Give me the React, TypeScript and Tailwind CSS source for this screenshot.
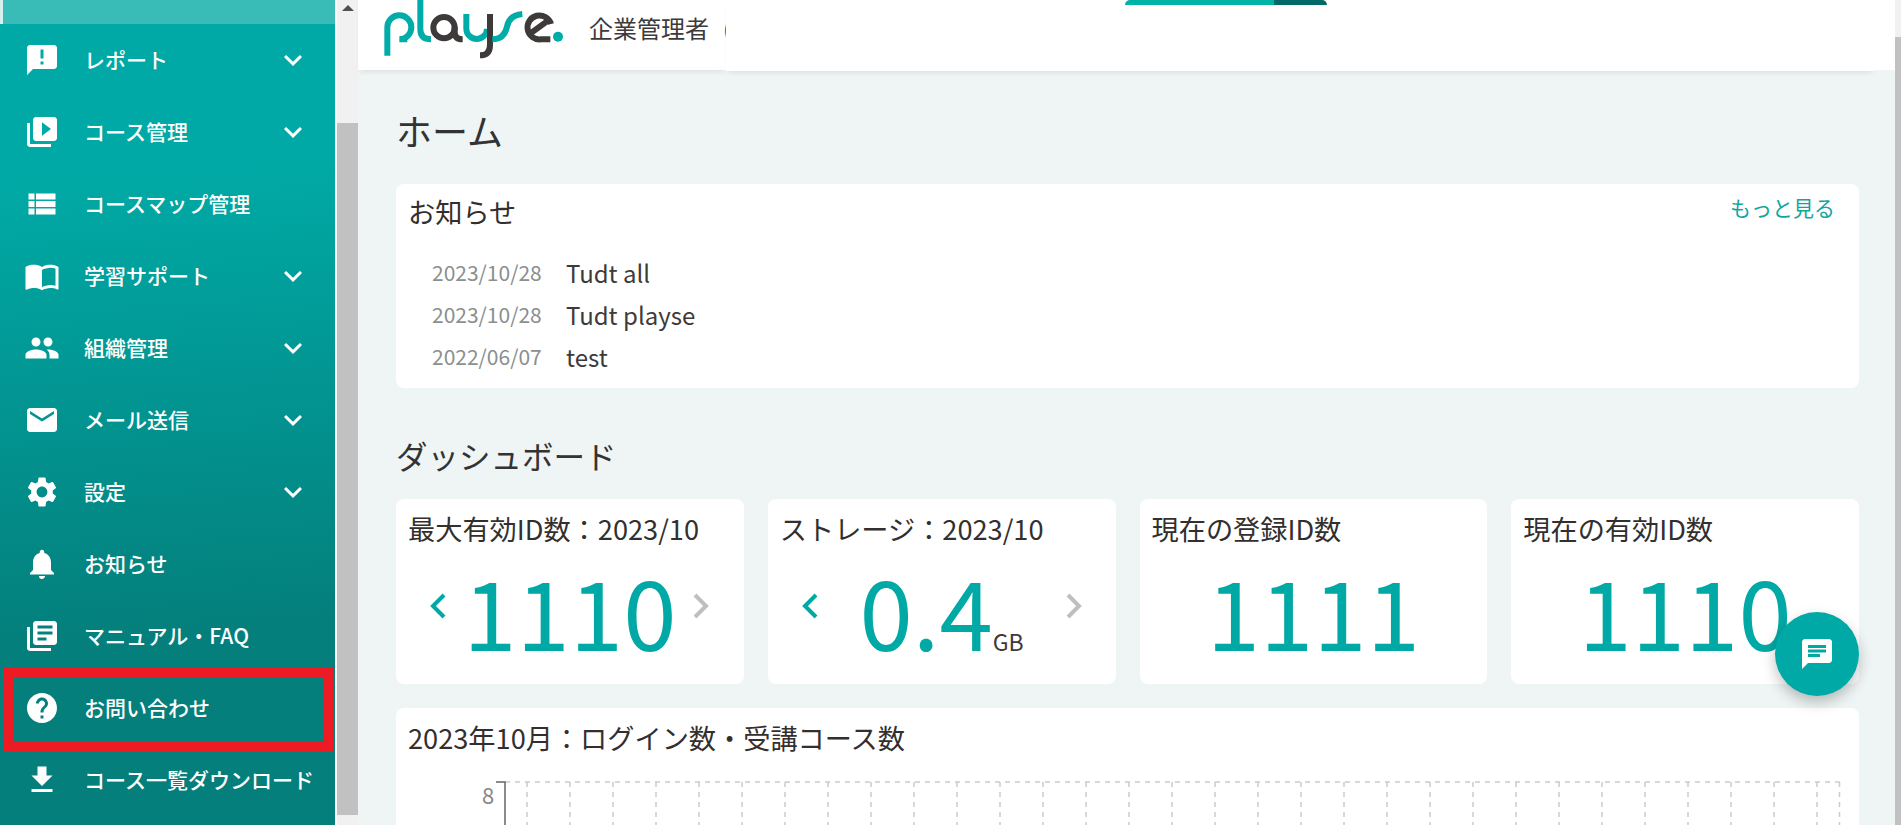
import type { ReactNode } from "react";
import {
  MdAnnouncement,
  MdChat,
  MdEmail,
  MdExpandMore,
  MdGetApp,
  MdHelp,
  MdImportContacts,
  MdLibraryBooks,
  MdNotifications,
  MdPeople,
  MdSettings,
  MdVideoLibrary,
  MdViewList,
} from "react-icons/md";

const menu: { label: string; icon: ReactNode; more?: boolean; marked?: boolean }[] = [
  { label: "レポート", icon: <MdAnnouncement />, more: true },
  { label: "コース管理", icon: <MdVideoLibrary />, more: true },
  { label: "コースマップ管理", icon: <MdViewList /> },
  { label: "学習サポート", icon: <MdImportContacts />, more: true },
  { label: "組織管理", icon: <MdPeople />, more: true },
  { label: "メール送信", icon: <MdEmail />, more: true },
  { label: "設定", icon: <MdSettings />, more: true },
  { label: "お知らせ", icon: <MdNotifications /> },
  { label: "マニュアル・FAQ", icon: <MdLibraryBooks /> },
  { label: "お問い合わせ", icon: <MdHelp />, marked: true },
  { label: "コース一覧ダウンロード", icon: <MdGetApp /> },
];

const notices = [
  { date: "2023/10/28", title: "Tudt all" },
  { date: "2023/10/28", title: "Tudt playse" },
  { date: "2022/06/07", title: "test" },
];

function Sidebar() {
  return (
    <aside className="w-[335px] h-full shrink-0 bg-[linear-gradient(176deg,#00a9a5_22%,#047f7c_76%)] text-white">
      <div className="h-[24px] border-l-[3px] border-[#d5f0ef] bg-[#39bcb8]" />
      {menu.map((item) => (
        <div key={item.label} className="relative flex h-[72px] items-center">
          <span className="flex w-[84px] shrink-0 justify-center text-[36px]">{item.icon}</span>
          <span className="mb-[2px] flex-1 text-[21px] font-medium leading-none">{item.label}</span>
          {item.more && (
            <span className="mr-[24px] text-[36px]">
              <MdExpandMore />
            </span>
          )}
          {item.marked && (
            <div className="absolute -top-[4px] -bottom-[8px] left-[4px] right-[2px] border-[10px] border-[#ed1c24]" />
          )}
        </div>
      ))}
    </aside>
  );
}

function SideScrollbar() {
  return (
    <div className="flex h-full w-[23px] shrink-0 flex-col border-l-[2px] border-white bg-[#f1f1f1]">
      <div className="flex h-[123px] justify-center pt-[5px]">
        <div className="h-0 w-0 border-x-[6px] border-b-[6px] border-x-transparent border-b-[#505050]" />
      </div>
      <div className="h-[692px] bg-[#c1c1c1]" />
    </div>
  );
}

function Logo() {
  return (
    <svg width="200" height="64" viewBox="0 0 600 192" fill="none" strokeWidth="18" className="shrink-0">
      <path d="M37 167V82a36 36 0 1 1 36 36h24" stroke="#00aca7" />
      <path d="M136 0v88q0 30 32 30" stroke="#00aca7" />
      <circle cx="207" cy="83" r="32" stroke="#3e3a39" />
      <path d="M239 80v16q0 22 24 22" stroke="#3e3a39" />
      <path d="M274 42v44a31 31 0 0 0 62 0" stroke="#00aca7" />
      <path d="M345 42v92q0 32-30 32" stroke="#3e3a39" />
      <path d="M352 118q36 0 44-38q7-35 46-38" stroke="#00aca7" />
      <path d="M458 106l58-42" stroke="#3e3a39" />
      <path d="M528 72a36 36 0 1 0-30 46h28" stroke="#3e3a39" />
      <circle cx="549" cy="110" r="15" fill="#00aca7" />
    </svg>
  );
}

function Header() {
  return (
    <header className="flex shrink-0 items-start">
      <div className="flex h-[70px] w-[368px] items-start overflow-hidden bg-white pl-[17px] shadow-[0_4px_5px_-2px_rgba(0,0,0,0.08)]">
        <Logo />
        <span className="mt-[10px] ml-[14px] shrink-0 whitespace-nowrap text-[24px] leading-[35px] text-[#3e3a39]">企業管理者</span>
        <span className="mt-[10px] ml-[14px] shrink-0 text-[24px] leading-[35px] text-[#3e3a39]">(</span>
      </div>
      <div className="flex h-[71px] flex-1 bg-white pl-[399px] shadow-[0_4px_5px_-2px_rgba(0,0,0,0.08)]">
        <div className="flex h-[5px] overflow-hidden rounded-t-[6px]">
          <div className="w-[149px] bg-[#00b3a7]" />
          <div className="w-[53px] bg-[#006b66]" />
        </div>
      </div>
      <div className="h-[70px] w-[21px] bg-white" />
    </header>
  );
}

function Chevron({ dir, active }: { dir: "left" | "right"; active: boolean }) {
  return (
    <svg width="16" height="26" viewBox="0 0 16 26" fill="none" className={active ? "mb-[8px] shrink-0 text-[#00a9a5]" : "mb-[8px] shrink-0 text-[#bfbfbf]"}>
      <path d={dir === "left" ? "M14 2L3 13l11 11" : "M2 2l11 11L2 24"} stroke="currentColor" strokeWidth="4" />
    </svg>
  );
}

function StatCard({ title, value, unit, nav }: { title: string; value: string; unit?: string; nav?: boolean }) {
  return (
    <div className="h-[185px] rounded-[8px] bg-white px-[12px]">
      <h3 className="pt-[10px] text-[27.2px] leading-[39px] text-[#332f2e]">{title}</h3>
      <div className="mt-[2px] flex h-[120px] items-center justify-center">
        {nav && <Chevron dir="left" active />}
        <div className={nav ? (unit ? "mx-[42px] flex items-baseline" : "mx-[17px] flex items-baseline") : "flex items-baseline"}>
          <span className="text-[96px] leading-[120px] text-[#00a9a5]">{value}</span>
          {unit && <span className="text-[23px] leading-none text-[#3e3a39]">{unit}</span>}
        </div>
        {nav && <Chevron dir="right" active={false} />}
      </div>
    </div>
  );
}

function ChartGrid() {
  const xs = Array.from({ length: 31 }, (_, i) => 57 + i * 43);
  return (
    <svg width="1380" height="60" viewBox="0 0 1380 60" fill="none" className="block">
      <path d="M35 17H1370" stroke="#cccccc" strokeWidth="1.5" strokeDasharray="5 5" />
      {xs.map((x) => (
        <path key={x} d={`M${x} 17V60`} stroke="#cccccc" strokeWidth="1.5" strokeDasharray="5 5" />
      ))}
      <path d="M1369.5 17V60" stroke="#cccccc" strokeWidth="1.5" strokeDasharray="5 5" />
      <path d="M26 17H35V60" stroke="#666666" strokeWidth="1.5" />
    </svg>
  );
}

export default function App() {
  return (
    <div className="relative flex h-[825px] w-[1901px] overflow-hidden bg-[#eff5f5] font-['Noto_Sans_CJK_JP','Noto_Sans',sans-serif]">
      <Sidebar />
      <SideScrollbar />
      <div className="flex h-full min-w-0 flex-1 flex-col">
        <Header />
        <main className="pl-[38px] pr-[36px]">
          <h1 className="mt-[33px] text-[36px] leading-[52px] text-[#333333]">ホーム</h1>
          <section className="relative mt-[28px] h-[204px] rounded-[8px] bg-white px-[12px]">
            <div className="flex h-[46px] items-start justify-between pt-[8px]">
              <h2 className="text-[27.2px] leading-[39px] text-[#332f2e]">お知らせ</h2>
              <a className="mr-[12px] text-[21px] leading-[30px] text-[#12a5a0]">もっと見る</a>
            </div>
            <ul className="mt-[22px] pl-[24px]">
              {notices.map((n, i) => (
                <li key={i} className="flex h-[42px] items-center">
                  <span className="w-[134px] text-[21px] text-[#8a8f8f]">{n.date}</span>
                  <span className="text-[24px] text-[#3e3a39]">{n.title}</span>
                </li>
              ))}
            </ul>
          </section>
          <h2 className="mt-[44px] text-[31.5px] leading-[46px] text-[#333333]">ダッシュボード</h2>
          <div className="mt-[21px] grid grid-cols-4 gap-[24px]">
            <StatCard title="最大有効ID数：2023/10" value="1110" nav />
            <StatCard title="ストレージ：2023/10" value="0.4" unit="GB" nav />
            <StatCard title="現在の登録ID数" value="1111" />
            <StatCard title="現在の有効ID数" value="1110" />
          </div>
          <section className="mt-[24px] h-[300px] rounded-[8px] bg-white px-[12px]">
            <h3 className="pt-[10px] text-[27.2px] leading-[39px] text-[#332f2e]">2023年10月：ログイン数・受講コース数</h3>
            <div className="relative ml-[62px] mt-[8px]">
              <ChartGrid />
              <span className="absolute left-[12px] top-[18px] text-[22px] leading-none text-[#888888]">8</span>
            </div>
          </section>
        </main>
      </div>
      <div className="flex h-full w-[6px] shrink-0 flex-col bg-[#f1f1f1]">
        <div className="mt-[37px] flex-1 bg-[#c1c1c1]" />
      </div>
      <button className="absolute left-[1775px] top-[612px] flex h-[84px] w-[84px] items-center justify-center rounded-full bg-[#00a9a5] text-[36px] text-white shadow-[0_6px_14px_rgba(0,0,0,0.25)]">
        <MdChat />
      </button>
    </div>
  );
}
